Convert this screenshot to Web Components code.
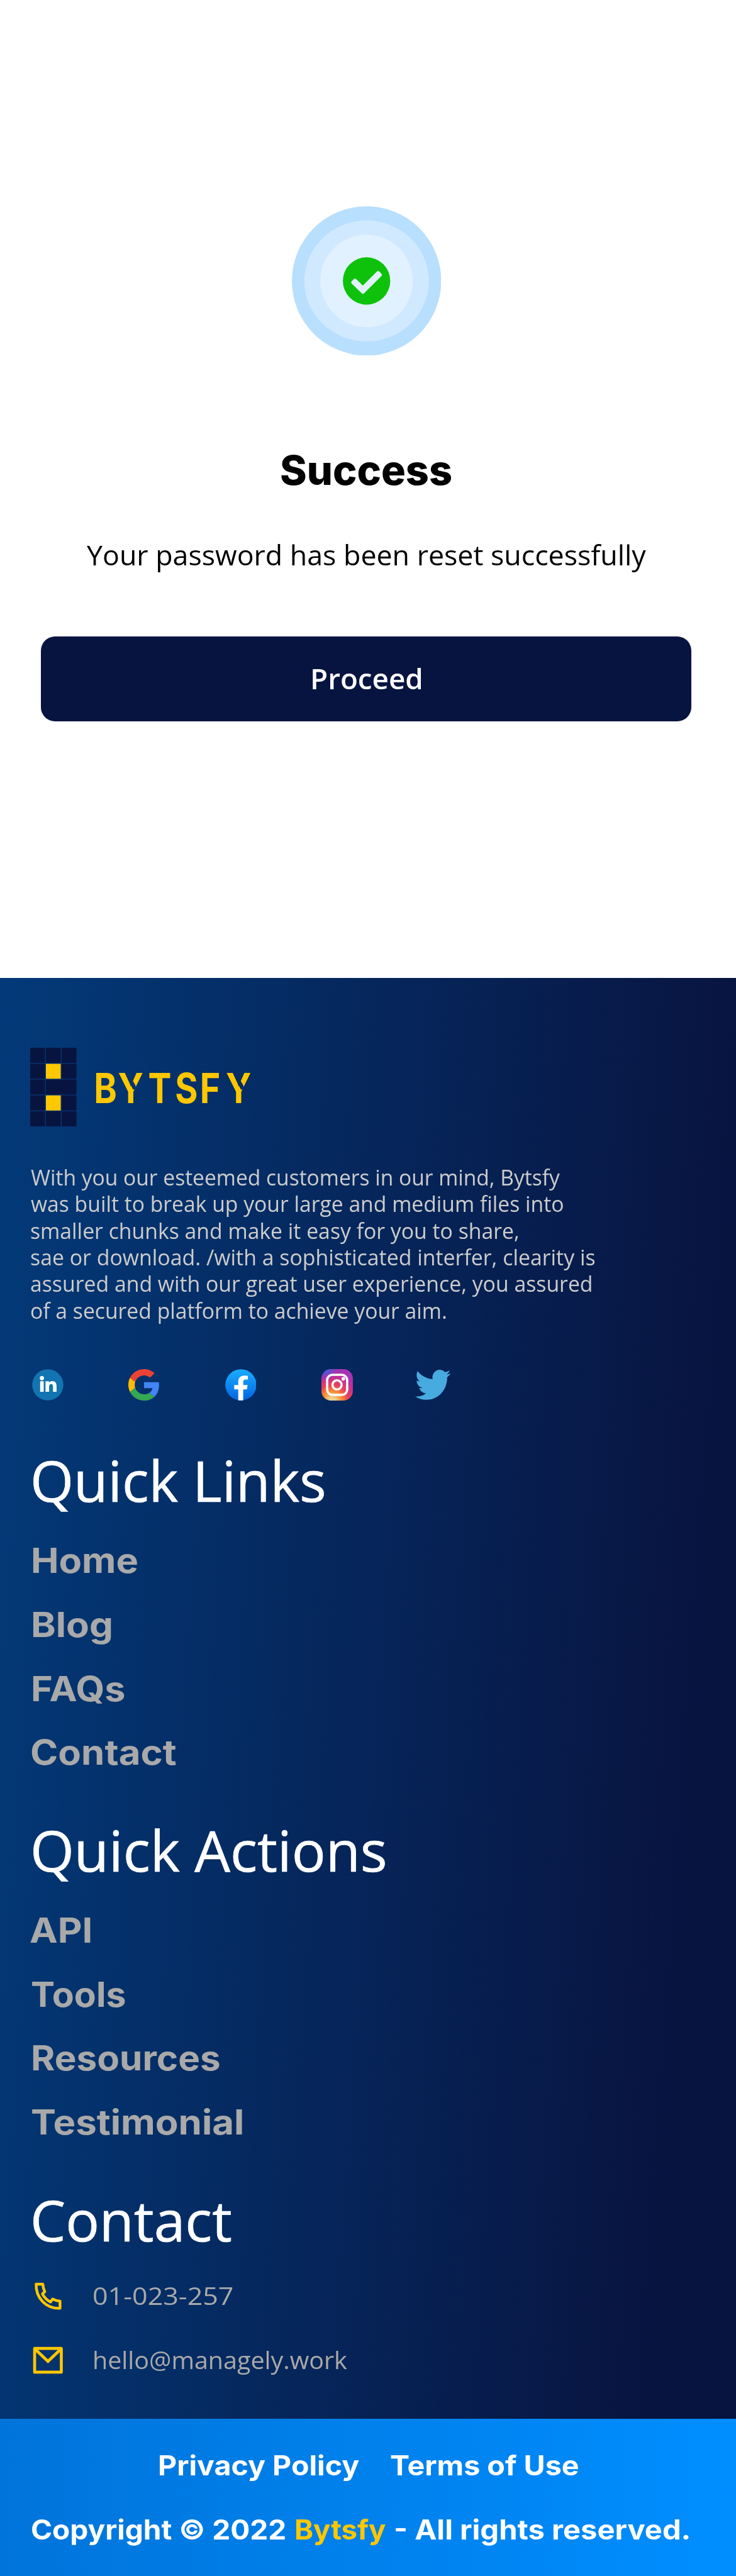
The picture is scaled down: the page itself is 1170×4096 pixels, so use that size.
<!DOCTYPE html>
<html lang="en">
<head>
<meta charset="utf-8">
<title>Bytsfy – Success</title>
<style>
  :root { --u: .94215px; }
  html, body { margin: 0; padding: 0; background: #fff; }
</style>
</head>
<body>
<success-page></success-page>
<script>
const U = .94215;
const define = (name, html, init) => customElements.define(name, class extends HTMLElement {
  constructor() {
    super();
    const t = document.createElement('template');
    t.innerHTML = html;
    this.attachShadow({ mode: 'open' }).append(t.content.cloneNode(true));
  }
  connectedCallback() { if (init) init.call(this); }
});

/* One line of text whose glyphs are widened so that its ink spans `w` design units. */
const canvas = document.createElement('canvas').getContext('2d');
define('ink-text', `<style>
  :host { display: block; white-space: nowrap; flex: none; line-height: 1 }
  span { display: inline-block; font: inherit; line-height: inherit; transform-origin: 0 50% }
</style><span><slot></slot></span>`, function () {
  const s = this.getAttribute('s') * U, w = this.getAttribute('w') * U, l = this.getAttribute('l') * U;
  const weight = this.getAttribute('weight') || 400;
  const family = this.hasAttribute('display') ? 'Inter' : '"Open Sans"';
  const text = this.textContent;
  canvas.font = `${weight} ${s}px ${family}`;
  const m = canvas.measureText(text);
  const stretch = w / (m.actualBoundingBoxRight + m.actualBoundingBoxLeft);
  this.style.cssText += `;font:${weight} ${s}px/${l}px ${family},sans-serif;width:${w}px;height:${l}px;margin-left:${(this.getAttribute('inset') || 0) * U}px`;
  const span = this.shadowRoot.querySelector('span');
  span.style.transform = `scaleX(${stretch})`;
  span.style.marginLeft = m.actualBoundingBoxLeft * stretch + 'px';
});

define('success-badge', `<style>
  :host { display: block } svg { display: block; width: calc(252*var(--u)); height: calc(252*var(--u)) }
</style><svg viewBox="0 0 252 252">
  <circle cx="126" cy="126" r="126" fill="#b9dffe"/>
  <ellipse cx="126" cy="126" rx="105" ry="102" fill="#d1e9ff"/>
  <circle cx="126" cy="126" r="78" fill="#e2f1ff"/>
  <circle cx="126" cy="126" r="40" fill="#0ec20c"/>
  <path d="M102.5 128.5 106.5 124.5 119.8 137.4 145.5 111.7 149.5 115.8 119.8 145.3Z" fill="#e2f1ff" stroke="#e2f1ff" stroke-width="5" stroke-linejoin="round"/>
</svg>`);

define('primary-button', `<style>
  :host { display: block }
  button { display: flex; align-items: center; justify-content: center; width: calc(1098*var(--u)); height: calc(144*var(--u));
    border: 0; padding: 0; border-radius: calc(24*var(--u)); background: #081440; color: #fff }
</style><button><slot></slot></button>`);

define('success-hero', `<style>
  :host { display: flex; flex-direction: column; align-items: center; box-sizing: border-box; width: calc(1236*var(--u)); height: calc(1650*var(--u)); padding-top: calc(348*var(--u)); color: #000 }
  .title { margin-top: calc(150*var(--u)) }
  .note { margin-top: calc(68*var(--u)) }
  primary-button { margin-top: calc(108*var(--u)) }
</style>
<success-badge></success-badge>
<div class="title"><ink-text display weight="800" s="69" l="88" w="287.5">Success</ink-text></div>
<div class="note"><ink-text s="47.4" l="60" w="944">Your password has been reset successfully</ink-text></div>
<primary-button><ink-text weight="600" s="47.4" l="60" w="183.5">Proceed</ink-text></primary-button>`);

define('brand-logo', `<style>
  :host { display: block } svg { display: block; width: calc(380*var(--u)); height: calc(133*var(--u)) }
  text { font: 700 70px Inter, sans-serif; fill: #ffc700 }
</style><svg viewBox="0 0 380 133">
  <g fill="#081440">
    <path d="M2 0H25V25.7H0V2Q0 0 2 0ZM26.5 0h25v25.7h-25zM53 0H76Q78 0 78 2V25.7H53zM0 27h25v25.3H0zM53 27h25v25.3H53zM0 53.7h25v25.3H0zM26.5 53.7H76Q78 53.7 78 55.7V77Q78 79 76 79H26.5zM0 80.4h25v25.5H0zM53 80.4h25v25.5H53zM0 107.3h25V133H2Q0 133 0 131zM26.5 107.3h25V133h-25zM53 107.3h25V131Q78 133 76 133H53z"/>
  </g>
  <path d="M26.5 27h25v25.3h-25zM26.5 80.4h25v25.5h-25z" fill="#ffc700"/>
  <mask id="cut" maskUnits="userSpaceOnUse" x="0" y="0" width="380" height="133">
    <path d="M0 0H380V133H0Z" fill="#fff"/>
    <path d="M159.8 42H177.6L172 54 177.7 63.7 179 70.5 173.3 70.3Z"/>
    <path d="M159.8 42H177.6L172 54 177.7 63.7 179 70.5 173.3 70.3Z" transform="translate(182)"/>
  </mask>
  <g mask="url(#cut)"><text transform="translate(0 93.7) scale(.84 1)" x="127.8 176.3 237 291 340.8 393">BYTSFY</text></g>
</svg>`);

define('social-links', `<style>
  :host { display: flex; gap: calc(109.5*var(--u)); align-items: center; height: calc(53*var(--u)); padding-left: calc(3.5*var(--u)) }
  svg { display: block; flex: none; width: calc(53*var(--u)); height: calc(53*var(--u)) }
  .tw { width: calc(60*var(--u)); margin-left: calc(-3.5*var(--u)) }
</style>
<svg viewBox="0 0 53 53"><circle cx="26.5" cy="26.5" r="26.3" fill="#1275b1"/><g fill="#fff"><circle cx="16.6" cy="15.3" r="3.5"/><path d="M13.6 20.5h6v17.8h-6zM22.7 20.5h5.7v2.4c1.2-1.8 3-2.8 5.7-2.8 5 0 7.2 3.2 7.2 8.6v9.6h-6v-8.8c0-2.7-.9-4.2-3-4.2-2.3 0-3.6 1.6-3.6 4.3v8.7h-6z"/></g></svg>
<svg viewBox="0 0 48 48"><path fill="#ea4335" d="M24 9.5c3.54 0 6.71 1.22 9.21 3.6l6.85-6.85C35.9 2.38 30.47 0 24 0 14.62 0 6.51 5.38 2.56 13.22l7.98 6.19C12.43 13.72 17.74 9.5 24 9.5z"/><path fill="#4285f4" d="M46.98 24.55c0-1.57-.15-3.09-.38-4.55H24v9.02h12.94c-.58 2.96-2.26 5.48-4.78 7.18l7.73 6c4.51-4.18 7.09-10.36 7.09-17.65z"/><path fill="#fbbc05" d="M10.53 28.59c-.48-1.45-.76-2.99-.76-4.59s.27-3.14.76-4.59l-7.98-6.19C.92 16.46 0 20.12 0 24c0 3.88.92 7.54 2.56 10.78l7.97-6.19z"/><path fill="#34a853" d="M24 48c6.48 0 11.93-2.13 15.89-5.81l-7.73-6c-2.15 1.45-4.92 2.3-8.16 2.3-6.26 0-11.57-4.22-13.47-9.91l-7.98 6.19C6.51 42.62 14.62 48 24 48z"/></svg>
<svg viewBox="0 0 53 53"><defs><linearGradient id="f" x2="0" y2="1"><stop stop-color="#19aeff"/><stop offset="1" stop-color="#0364e2"/></linearGradient></defs><circle cx="26.5" cy="26.5" r="26.3" fill="url(#f)"/><path fill="#fff" d="M36.6 34.2 37.8 26.7H30.4V21.8c0-2.1 1-4.2 4.4-4.2h3.4V11.3s-3.1-.5-6-.5c-6.2 0-10.2 3.7-10.2 10.5v5.4h-6.8v7.5H22V52.6a27 27 0 0 0 8.4 0V34.2z"/></svg>
<svg viewBox="0 0 53 53"><defs>
  <radialGradient id="a" gradientUnits="userSpaceOnUse" cx="18" cy="54" r="50"><stop stop-color="#ead79a"/><stop offset=".12" stop-color="#ead08b"/><stop offset=".33" stop-color="#fb8c2f"/><stop offset=".55" stop-color="#e8425a"/><stop offset=".85" stop-color="#bd2f9f"/><stop offset="1" stop-color="#a634b4"/></radialGradient>
  <radialGradient id="b" gradientUnits="userSpaceOnUse" cx="6" cy="-2" r="25"><stop stop-color="#3b6be4"/><stop offset=".4" stop-color="#5450d2" stop-opacity=".8"/><stop offset="1" stop-color="#a433b4" stop-opacity="0"/></radialGradient></defs>
  <rect width="53" height="53" rx="16" fill="url(#a)"/><rect width="53" height="53" rx="16" fill="url(#b)"/>
  <g fill="none" stroke="#fff" stroke-width="3.8"><rect x="9.6" y="9.6" width="33.8" height="33.8" rx="9"/><circle cx="26.3" cy="26.6" r="7.7"/></g><circle cx="36.8" cy="16.4" r="3" fill="#fff"/></svg>
<svg class="tw" viewBox="0 1.8 24 20.4" preserveAspectRatio="none"><path fill="#48abe0" d="M23.953 4.57a10 10 0 01-2.825.775 4.958 4.958 0 002.163-2.723c-.951.555-2.005.959-3.127 1.184a4.92 4.92 0 00-8.384 4.482C7.69 8.095 4.067 6.13 1.64 3.162a4.822 4.822 0 00-.666 2.475c0 1.71.87 3.213 2.188 4.096a4.904 4.904 0 01-2.228-.616v.06a4.923 4.923 0 003.946 4.827 4.996 4.996 0 01-2.212.085 4.936 4.936 0 004.604 3.417 9.867 9.867 0 01-6.102 2.105c-.39 0-.779-.023-1.17-.067a13.995 13.995 0 007.557 2.209c9.053 0 13.998-7.496 13.998-13.985 0-.21 0-.42-.015-.63A9.935 9.935 0 0024 4.59z"/></svg>`);

define('footer-section', `<style>
  :host { display: flex; flex-direction: column; color: #a9a9a9; margin-top: calc(74.2*var(--u)) }
  .head { color: #fff; margin-bottom: calc(var(--head-gap, 45.7)*var(--u)); -webkit-text-stroke: .7px #fff }
  .items { display: flex; flex-direction: column; gap: calc(48*var(--u)) }
</style><div class="head"><slot name="head"></slot></div><div class="items"><slot></slot></div>`);

define('contact-row', `<style>
  :host { display: flex; align-items: center; height: calc(60*var(--u)) }
  svg { display: block; flex: none; width: calc(60*var(--u)); height: calc(60*var(--u)); margin-right: calc(46*var(--u)); fill: none; stroke: #ffc700; stroke-linejoin: round }
</style><svg viewBox="0 0 180 180"></svg><slot></slot>`, function () {
  this.shadowRoot.querySelector('svg').innerHTML = this.getAttribute('icon') === 'phone'
    ? '<path transform="translate(-33 -11)" stroke-width="14" d="M63 43H97Q98 62 107 81L95 92Q110 120 136 133L147 118Q164 127 184 129V165C113 167 61 113 63 43Z"/>'
    : '<g transform="translate(-33 -335)" stroke-width="15"><rect x="55.5" y="367.5" width="135" height="120"/><path d="M58 371 123 433 188 371" stroke-linejoin="miter"/></g>';
});

define('site-footer', `<style>
  :host { display: flex; flex-direction: column; box-sizing: border-box; height: calc(2432*var(--u)); padding: calc(118*var(--u)) 0 0 calc(51*var(--u));
    background: linear-gradient(94deg, #033a79 0%, #081440 89%) }
  .about { display: flex; flex-direction: column; margin: calc(63.5*var(--u)) 0 calc(76.5*var(--u)); color: #cccccc }
  .contact { --head-gap: 38.7 }
</style>
<brand-logo></brand-logo>
<div class="about">
  <ink-text inset="1.3" s="36" l="45" w="892.5">With you our esteemed customers in our mind, Bytsfy</ink-text>
  <ink-text inset="1.3" s="36" l="45" w="898">was built to break up your large and medium files into</ink-text>
  <ink-text inset="1.3" s="36" l="45" w="822.5">smaller chunks and make it easy for you to share,</ink-text>
  <ink-text inset="1.3" s="36" l="45" w="951.5">sae or download. /with a sophisticated interfer, clearity is</ink-text>
  <ink-text inset="1.3" s="36" l="45" w="945.5">assured and with our great user experience, you assured</ink-text>
  <ink-text inset="1.3" s="36" l="45" w="700.5">of a secured platform to achieve your aim.</ink-text>
</div>
<social-links></social-links>
<footer-section>
  <ink-text slot="head" weight="500" inset="4.8" s="94.4" l="120" w="490.6">Quick Links</ink-text>
  <ink-text display weight="700" inset="4.8" s="57.8" l="60" w="176.3">Home</ink-text>
  <ink-text display weight="700" inset="4.8" s="57.8" l="60" w="131.5">Blog</ink-text>
  <ink-text display weight="700" inset="4.8" s="57.8" l="60" w="154.5">FAQs</ink-text>
  <ink-text display weight="700" inset="2.4" s="57.8" l="60" w="243.5">Contact</ink-text>
</footer-section>
<footer-section>
  <ink-text slot="head" weight="500" inset="4.8" s="94.4" l="120" w="593.5">Quick Actions</ink-text>
  <ink-text display weight="700" inset="0" s="57.8" l="60" w="101.5">API</ink-text>
  <ink-text display weight="700" inset="1.7" s="57.8" l="60" w="158">Tools</ink-text>
  <ink-text display weight="700" inset="4.8" s="57.8" l="60" w="315.2">Resources</ink-text>
  <ink-text display weight="700" inset="1.7" s="57.8" l="60" w="355.8">Testimonial</ink-text>
</footer-section>
<footer-section class="contact">
  <ink-text slot="head" weight="500" inset="4.8" s="94.4" l="120" w="333.5">Contact</ink-text>
  <contact-row icon="phone"><ink-text inset=".5" s="41.5" l="60" w="235.5">01-023-257</ink-text></contact-row>
  <contact-row icon="mail"><ink-text inset="2" s="41.5" l="60" w="427">hello@managely.work</ink-text></contact-row>
</footer-section>`);

define('legal-bar', `<style>
  :host { display: flex; flex-direction: column; gap: calc(48.8*var(--u)); box-sizing: border-box; height: calc(4096px - 4082*var(--u)); padding-top: calc(49*var(--u)); color: #fff;
    background: linear-gradient(92deg, #0074da, #008eff) }
  div { display: flex }
  .links { padding-left: calc(269*var(--u)); gap: calc(52.5*var(--u)) }
  .copy { padding-left: calc(53*var(--u)) }
  .brand { color: #ffc700 }
</style>
<div class="links"><ink-text display weight="700" s="46" l="60" w="337.5">Privacy Policy</ink-text><ink-text display weight="700" s="46" l="60" w="317">Terms of Use</ink-text></div>
<div class="copy"><ink-text display weight="700" s="46" l="60" w="427.5">Copyright © 2022</ink-text><ink-text class="brand" display weight="700" inset="18.5" s="46" l="60" w="152">Bytsfy</ink-text><ink-text display weight="700" inset="16" s="46" l="60" w="495">- All rights reserved.</ink-text></div>`);

define('success-page', `<style>:host { display: block; height: 4096px; overflow: hidden }</style>
<success-hero></success-hero><site-footer></site-footer><legal-bar></legal-bar>`);
</script>
</body>
</html>
